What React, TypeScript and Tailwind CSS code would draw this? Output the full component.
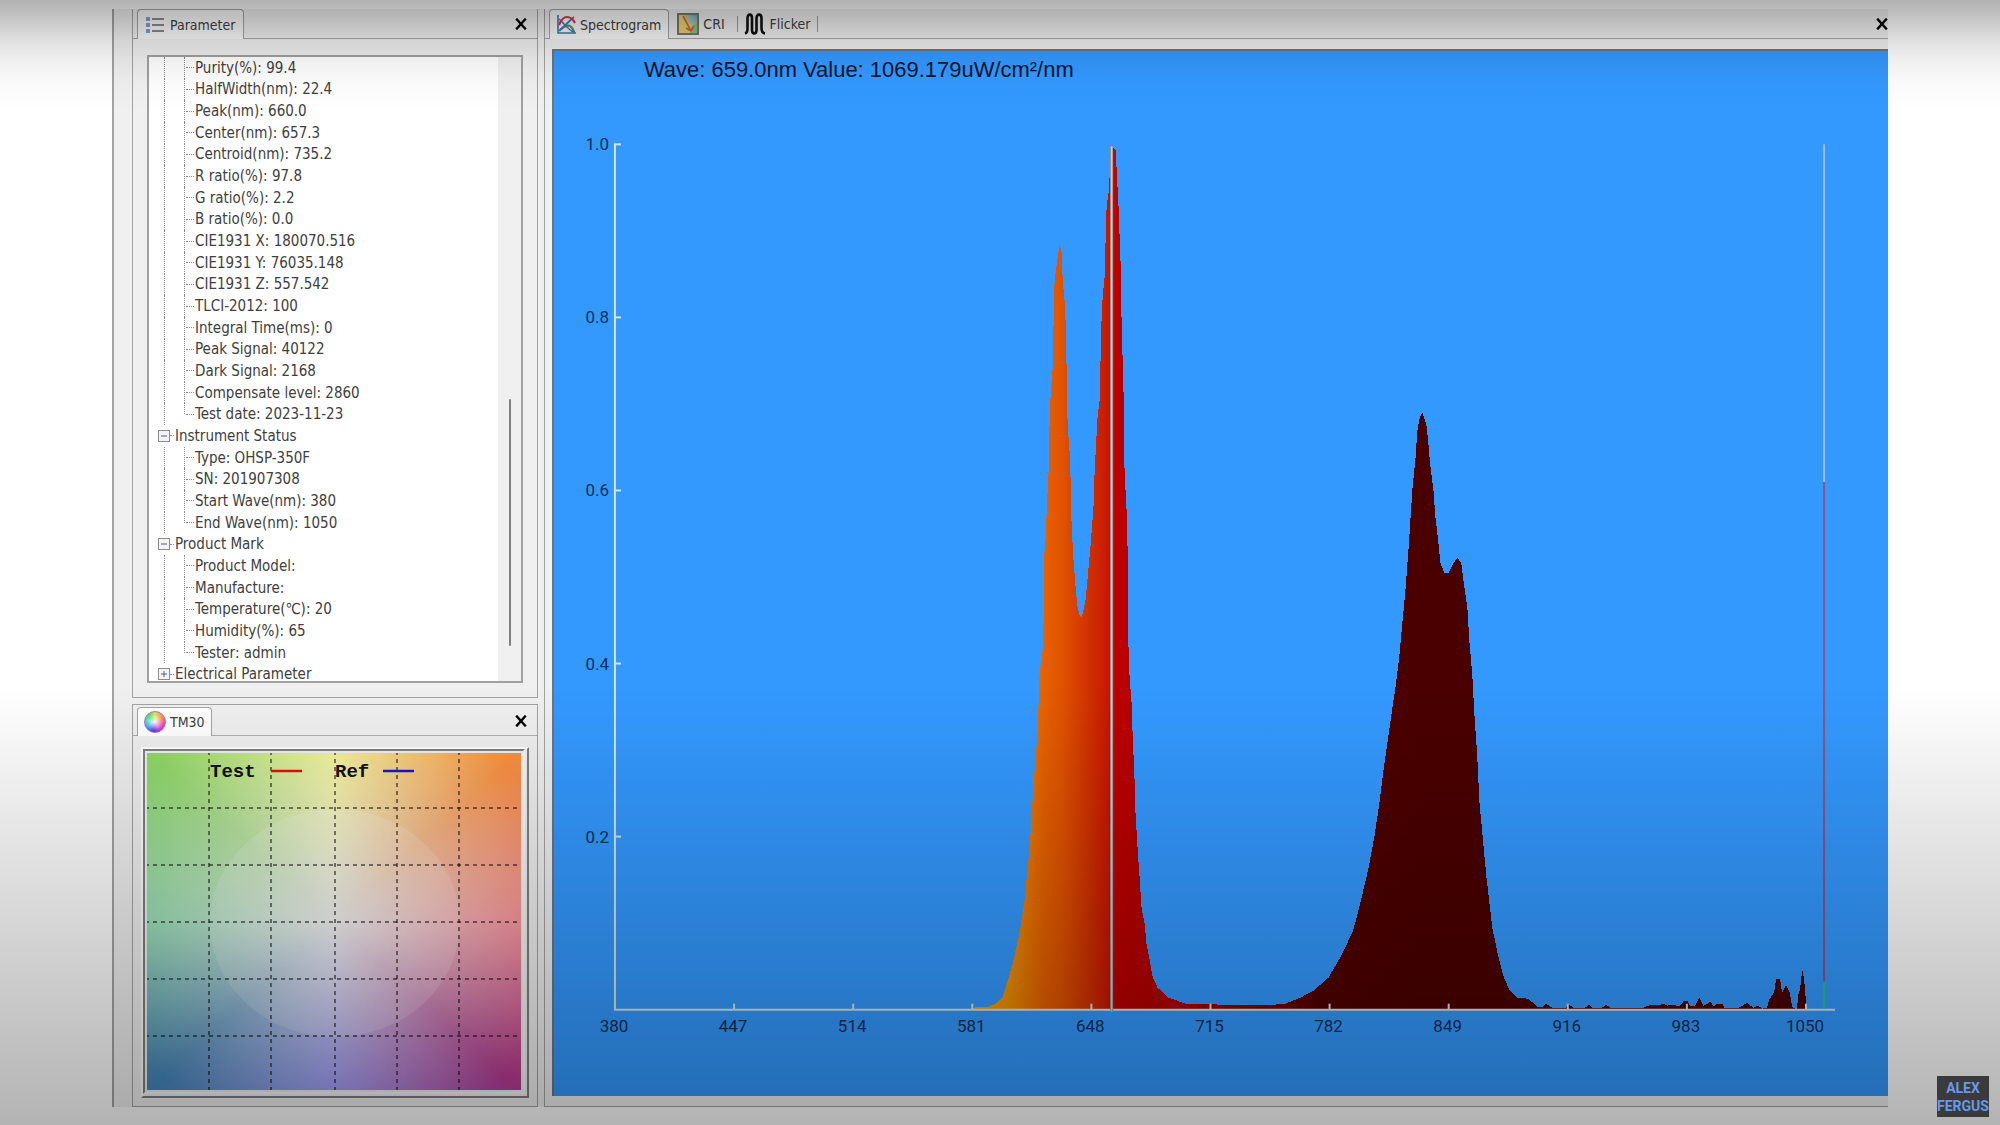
import React from 'react';

type TreeRow = {
  label: string;
  kind: 'leaf' | 'last' | 'open' | 'closed';
};

const treeRows: TreeRow[] = [
  { label: 'Purity(%): 99.4', kind: 'leaf' },
  { label: 'HalfWidth(nm): 22.4', kind: 'leaf' },
  { label: 'Peak(nm): 660.0', kind: 'leaf' },
  { label: 'Center(nm): 657.3', kind: 'leaf' },
  { label: 'Centroid(nm): 735.2', kind: 'leaf' },
  { label: 'R ratio(%): 97.8', kind: 'leaf' },
  { label: 'G ratio(%): 2.2', kind: 'leaf' },
  { label: 'B ratio(%): 0.0', kind: 'leaf' },
  { label: 'CIE1931 X: 180070.516', kind: 'leaf' },
  { label: 'CIE1931 Y: 76035.148', kind: 'leaf' },
  { label: 'CIE1931 Z: 557.542', kind: 'leaf' },
  { label: 'TLCI-2012: 100', kind: 'leaf' },
  { label: 'Integral Time(ms): 0', kind: 'leaf' },
  { label: 'Peak Signal: 40122', kind: 'leaf' },
  { label: 'Dark Signal: 2168', kind: 'leaf' },
  { label: 'Compensate level: 2860', kind: 'leaf' },
  { label: 'Test date: 2023-11-23', kind: 'last' },
  { label: 'Instrument Status', kind: 'open' },
  { label: 'Type: OHSP-350F', kind: 'leaf' },
  { label: 'SN: 201907308', kind: 'leaf' },
  { label: 'Start Wave(nm): 380', kind: 'leaf' },
  { label: 'End Wave(nm): 1050', kind: 'last' },
  { label: 'Product Mark', kind: 'open' },
  { label: 'Product Model:', kind: 'leaf' },
  { label: 'Manufacture:', kind: 'leaf' },
  { label: 'Temperature(℃): 20', kind: 'leaf' },
  { label: 'Humidity(%): 65', kind: 'leaf' },
  { label: 'Tester: admin', kind: 'last' },
  { label: 'Electrical Parameter', kind: 'closed' },
];

const waveTicks = [380, 447, 514, 581, 648, 715, 782, 849, 916, 983, 1050];
const valueTicks = ['1.0', '0.8', '0.6', '0.4', '0.2'];

// Plot geometry
const baseY = 959;
const topY = 93;
const waveX = (nm: number) => 60 + (nm - 380) * 1.779;
const valueY = (v: number) => baseY - v * (baseY - topY);

// Spectrum outlines, x,y in plot units
const orangeBand =
  '418,957 434,956 441,953 448,946 454,927 459,909 465,882 470,849 475,797 479,732 483,682 485,622 488,599 489,569 489,512 491,487 492,462 494,419 495,369 496,344 498,317 499,269 500,229 503,206 505,194 507,201 508,227 510,250 511,271 512,318 513,374 515,401 516,429 517,474 519,511 521,536 523,557 525,564 527,566';

const redBand =
  '529,559 531,549 533,527 536,494 537,481 539,454 540,421 542,384 543,366 545,349 546,307 547,267 548,247 550,226 551,189 552,156 554,141 555,126 556,102 558,95 561,99 562,117 564,156 565,184 566,211 567,269 569,343 570,421 572,459 573,497 573,569 575,626 577,652 578,682 580,729 581,764 583,797 585,826 587,857 590,872 592,894 595,909 598,926 603,937 614,947 631,953 669,954 719,954 731,953 746,947';

const infraRedBand =
  '759,940 774,927 788,903 799,879 806,852 814,818 820,786 825,752 829,720 833,692 837,664 841,637 845,605 848,572 851,540 854,500 856,470 858,438 861,409 863,380 865,368 868,361 872,373 874,392 876,415 879,438 881,465 884,491 886,512 890,522 894,522 899,512 903,507 907,512 909,529 913,556 915,590 918,624 920,662 923,706 925,750 929,793 932,825 935,851 938,877 943,901 949,925 955,939 963,947 974,948 983,956 989,956 992,953 998,957 1004,957';

const noiseFloor =
  '1006,957 1012,957 1015,954 1019,957 1031,957 1035,954 1038,957 1048,957 1052,954 1056,957 1066,957 1089,957 1094,955 1099,954 1106,954 1110,953 1113,955 1119,954 1125,956 1130,950 1133,950 1136,955 1141,955 1145,947 1149,955 1152,954 1156,951 1160,956 1163,953 1168,953 1170,957 1185,957 1193,952 1199,957 1204,955 1208,958 1213,957 1215,949 1220,942 1222,928 1226,928 1228,942 1232,934 1236,943 1238,956 1241,958 1243,958 1244,945 1246,939 1248,920 1249,920 1250,931 1251,935 1252,958';

function CloseButton() {
  return (
    <button type="button" aria-label="Close" className="flex h-5 w-5 items-center justify-center text-black">
      <svg viewBox="0 0 12 12" className="h-3 w-3">
        <path d="M2 1.5 L10 10.5 M10 1.5 L2 10.5" stroke="currentColor" strokeWidth="2.4" strokeLinecap="square" />
      </svg>
    </button>
  );
}

function ListIcon() {
  return (
    <svg viewBox="0 0 18 18" className="h-[18px] w-[18px]">
      {[1, 7, 13].map((y) => (
        <g key={y}>
          <rect x="0" y={y} width="4" height="4" fill="#7f9fcf" />
          <rect x="6" y={y + 1} width="12" height="2" fill="#8a8a8a" />
        </g>
      ))}
    </svg>
  );
}

function SpectrumIcon() {
  return (
    <svg viewBox="0 0 19 19" className="h-[19px] w-[19px]" fill="none">
      <path d="M1 0 V18 H19" stroke="#3f78b8" strokeWidth="1.6" />
      <path d="M2 16 C6 12 10 10 13 11 C15 12 16 14 17 17" stroke="#55a055" strokeWidth="2.2" />
      <path d="M2 4 C6 7 8 11 11 13 C13 15 16 17 18 17" stroke="#3f78b8" strokeWidth="1.4" />
      <path d="M3 15 C8 11 12 6 17 2" stroke="#4a78c8" strokeWidth="1.8" />
      <path d="M2 10 C4 5 6 2 10 2 C13 2 16 4 18 8" stroke="#d23a4a" strokeWidth="2.2" />
    </svg>
  );
}

function CriIcon() {
  return (
    <svg viewBox="0 0 22 22" className="h-[22px] w-[22px]">
      <defs>
        <linearGradient id="criFill" x1="0" y1="1" x2="1" y2="0">
          <stop offset="0" stopColor="#e8c860" />
          <stop offset="0.45" stopColor="#d8d890" />
          <stop offset="1" stopColor="#5f9fe0" />
        </linearGradient>
      </defs>
      <rect x="1" y="1" width="20" height="20" fill="url(#criFill)" />
      <path d="M2 2 H7 L10 12 L14 20 H2 Z" fill="#ecd070" />
      <path d="M14 14 L20 9 V20 H13 Z" fill="#8fc088" />
      <path d="M6 3 L14 18 M14 18 L9 15 M14 18 L17 13" stroke="#d8662a" strokeWidth="1.6" fill="none" />
      <rect x="1" y="1" width="20" height="20" fill="none" stroke="#77786a" strokeWidth="2" />
    </svg>
  );
}

function FlickerIcon() {
  return (
    <svg viewBox="0 0 22 22" className="h-[22px] w-[22px]">
      <path
        d="M1 20.5 C3 20 3.500 18 3.500 15 V5 C3.500 0.500 8 0.500 8 5 V17 C8 21.500 12.500 21.500 12.500 17 V5 C12.500 0.500 17.500 0.500 17.500 5 V15 C17.500 18 18 20 21 20.500"
        fill="none"
        stroke="#111"
        strokeWidth="2.6"
      />
    </svg>
  );
}

function ColorWheelIcon() {
  return (
    <span className="h-[22px] w-[22px] rounded-full border border-[#b070d8] bg-[radial-gradient(circle,#ffffff_0%,#ffffff00_65%),conic-gradient(#d8e840,#ff9040_50deg,#ff4090_100deg,#d030e0_145deg,#5030e0_190deg,#40a8f0_240deg,#40e8c0_280deg,#50e050_320deg,#d8e840)]" />
  );
}

function TreeItem({ label, kind }: TreeRow) {
  if (kind === 'open' || kind === 'closed') {
    return (
      <li className="flex items-center pl-[9px] whitespace-nowrap">
        <button
          type="button"
          aria-label={`Toggle ${label}`}
          className="flex h-3 w-3 items-center justify-center border border-[#8c8c8c] bg-[#f4f4f4]"
        >
          <svg viewBox="0 0 8 8" className="h-2 w-2" stroke="#4a5fa8">
            <path d={kind === 'open' ? 'M1 4 H7' : 'M1 4 H7 M4 1 V7'} />
          </svg>
        </button>
        <span className="w-1 border-t border-dotted border-[#999]" />
        <span className="ml-px">{label}</span>
      </li>
    );
  }
  return (
    <li className="flex items-center pl-[15px] whitespace-nowrap">
      <span className="w-5 self-stretch border-l border-dotted border-[#888]" />
      <span
        className={
          kind === 'last'
            ? 'h-1/2 w-0.5 self-start border-l border-dotted border-[#888]'
            : 'w-0.5 self-stretch border-l border-dotted border-[#888]'
        }
      />
      <span className="w-2 border-t border-dotted border-[#888]" />
      <span className="ml-px">{label}</span>
    </li>
  );
}

function ParameterPanel() {
  return (
    <section className="flex min-h-0 flex-1 flex-col border border-t-0 border-[#a3a3a3] bg-[#f0f0f0]">
      <header className="flex h-[30px] items-stretch border-b border-[#a3a3a3] pl-1">
        <button
          type="button"
          className="-mb-px flex items-center gap-1.5 rounded-t border border-b-0 border-[#a3a3a3] bg-[#fafafa] pr-2 pl-2"
        >
          <ListIcon />
          Parameter
        </button>
        <div className="ml-auto flex items-center pr-1.5">
          <CloseButton />
        </div>
      </header>
      <div className="flex min-h-0 flex-1 px-3.5 pt-4 pb-3.5">
        <div className="flex min-w-0 flex-1 overflow-hidden border-2 border-[#a0a0a0] bg-white">
          <ul className="-mb-1 grid flex-1 auto-rows-fr text-[15px] leading-4">
            {treeRows.map((row) => (
              <TreeItem key={row.label} {...row} />
            ))}
          </ul>
          <div className="flex w-[23px] flex-col items-center bg-[#f0f0f0]">
            <div className="flex-[343]" />
            <div className="w-0.5 flex-[248] rounded-full bg-[#808080]" />
            <div className="flex-[35]" />
          </div>
        </div>
      </div>
    </section>
  );
}

function ColorVectorPanel() {
  return (
    <section className="flex flex-col border border-[#a3a3a3] bg-[#f0f0f0]">
      <header className="flex h-[31px] items-stretch border-b border-[#b0b0b0] pt-0.5 pl-1">
        <button
          type="button"
          className="-mb-px flex items-center gap-1 rounded-t border border-b-0 border-[#a3a3a3] bg-white pr-1.5 pl-1.5"
        >
          <ColorWheelIcon />
          TM30
        </button>
        <div className="ml-auto flex items-center pr-1.5">
          <CloseButton />
        </div>
      </header>
      <div className="px-2 pt-[11px] pb-2">
        <div className="border-t-2 border-r-2 border-b-2 border-l-2 border-t-[#ffffff] border-r-[#808080] border-b-[#808080] border-l-[#ffffff] pr-0.5 pb-0.5">
          <div className="border-2 border-t-[#808080] border-r-[#f8f8f8] border-b-[#f8f8f8] border-l-[#808080] p-0.5">
            <svg
              viewBox="0 0 374 337"
              className="block w-full bg-[radial-gradient(ellipse_farthest-side,#f4f4f4_0%,#f4f4f4cc_25%,#f4f4f46b_70%,#f4f4f400_130%),conic-gradient(#f4f488,#fa9040_48deg,#ff8088_90deg,#b83c94_132deg,#8c88fa_180deg,#4688bc_228deg,#84dca8_270deg,#90d868_312deg,#f4f488)]"
            >
              <ellipse cx="188" cy="170" rx="125" ry="114" fill="#ffffff" fillOpacity="0.16" />
              <g stroke="#000000" strokeOpacity="0.65" strokeDasharray="4 4">
                {[62, 124, 188, 250, 312].map((x) => (
                  <line key={x} x1={x} y1="-2" x2={x} y2="337" strokeWidth="1.5" />
                ))}
                {[55, 112, 169, 226, 283].map((y) => (
                  <line key={y} x1="-2" y1={y} x2="374" y2={y} strokeWidth="1.5" />
                ))}
              </g>
              <g fontFamily="'Liberation Mono', monospace" fontSize="19" fontWeight="bold" fill="#111">
                <text x="63" y="24">Test</text>
                <text x="188" y="24">Ref</text>
              </g>
              <line x1="124" y1="18" x2="155" y2="18" stroke="#e01010" strokeWidth="2.5" />
              <line x1="236" y1="18" x2="267" y2="18" stroke="#1818c8" strokeWidth="2.5" />
            </svg>
          </div>
        </div>
      </div>
    </section>
  );
}

function SpectrumChart() {
  return (
    <svg viewBox="-1 0 1335 1045" className="block h-full w-full">
      <defs>
        <linearGradient id="spectrum" gradientUnits="userSpaceOnUse" x1="418" y1="0" x2="868" y2="0">
          <stop offset="0" stopColor="#f0a400" />
          <stop offset="0.08" stopColor="#f09000" />
          <stop offset="0.16" stopColor="#e66000" />
          <stop offset="0.2" stopColor="#e05200" />
          <stop offset="0.26" stopColor="#d03000" />
          <stop offset="0.3" stopColor="#c81800" />
          <stop offset="0.32" stopColor="#bc0000" />
          <stop offset="0.45" stopColor="#b00000" />
          <stop offset="0.6" stopColor="#800000" />
          <stop offset="0.78" stopColor="#500000" />
          <stop offset="1" stopColor="#4a0000" />
        </linearGradient>
      </defs>

      <text x="89" y="26" fontFamily="'Liberation Sans', sans-serif" fontSize="22" fill="#0a1430">
        Wave: 659.0nm Value: 1069.179uW/cm²/nm
      </text>

      <polygon
        points={`418,959 ${orangeBand} ${redBand} ${infraRedBand} ${noiseFloor} 1252,959`}
        fill="url(#spectrum)"
        shapeRendering="crispEdges"
      />

      {/* Axes */}
      <g stroke="#d4e4e0" strokeWidth="2" fill="none">
        <path d={`M60 ${topY} V${baseY} H1281`} />
        {waveTicks.map((nm) => (
          <line key={nm} x1={waveX(nm)} y1={baseY - 6} x2={waveX(nm)} y2={baseY} />
        ))}
        {valueTicks.map((v) => (
          <line key={v} x1="59" y1={valueY(Number(v))} x2="66" y2={valueY(Number(v))} />
        ))}
      </g>
      <g fontFamily="Roboto, sans-serif" fontSize="17" fill="#0f3058">
        {waveTicks.map((nm) => (
          <text key={nm} x={waveX(nm) - 1} y={baseY + 22} textAnchor="middle">
            {nm}
          </text>
        ))}
        {valueTicks.map((v) => (
          <text key={v} x="54" y={valueY(Number(v)) + 6} textAnchor="end">
            {v}
          </text>
        ))}
      </g>

      {/* Cursor */}
      <line x1="557" y1={topY + 2} x2="557" y2={baseY + 2} stroke="#7f6a70" strokeWidth="3" />
      <line x1="557" y1={topY + 2} x2="557" y2={baseY + 2} stroke="#d0c8c8" strokeWidth="2" />

      {/* Level bar */}
      <g strokeWidth="2">
        <line x1="1270" y1={topY} x2="1270" y2="431" stroke="#a0bce8" />
        <line x1="1270" y1="431" x2="1270" y2="931" stroke="#945080" />
        <line x1="1270" y1="931" x2="1270" y2="958" stroke="#2cc080" />
      </g>
    </svg>
  );
}

function SpectrogramPanel() {
  return (
    <section className="flex min-w-0 flex-1 flex-col border-b border-l border-[#a3a3a3] bg-[#f0f0f0]">
      <header className="flex h-[30px] items-stretch border-b border-[#a3a3a3] pl-1">
        <button
          type="button"
          className="-mb-px flex items-center gap-1 rounded-t border border-b-0 border-[#a3a3a3] bg-[#fafafa] px-[7px]"
        >
          <SpectrumIcon />
          Spectrogram
        </button>
        <button type="button" className="flex items-center gap-1 px-2">
          <CriIcon />
          CRI
        </button>
        <span className="ml-1 h-4 w-px self-center bg-[#999]" />
        <button type="button" className="flex items-center gap-1 px-1.5">
          <FlickerIcon />
          Flicker
        </button>
        <span className="h-4 w-px self-center bg-[#999]" />
        <div className="-mr-1 ml-auto flex items-center">
          <CloseButton />
        </div>
      </header>
      <div className="min-h-0 flex-1 pt-2.5 pb-2.5 pl-[7px]">
        <div className="h-full border-t-2 border-l-2 border-[#6c7680] bg-[#3399ff]">
          <SpectrumChart />
        </div>
      </div>
    </section>
  );
}

export default function App() {
  return (
    <div className="relative flex h-screen overflow-hidden bg-white px-28 pt-[9px] pb-[18px] font-['DejaVu_Sans_Condensed','DejaVu_Sans','Noto_Sans_CJK_SC',sans-serif] text-sm text-[#404040]">
      <main className="flex min-w-0 flex-1 gap-1.5 overflow-hidden border-l-2 border-[#a3a3a3] bg-[#f0f0f0] pl-[18px]">
        <div className="flex w-[406px] shrink-0 flex-col gap-1.5">
          <ParameterPanel />
          <ColorVectorPanel />
        </div>
        <SpectrogramPanel />
      </main>

      {/* Shade along the top and bottom edges */}
      <div className="pointer-events-none absolute inset-x-0 top-0 h-[110px] bg-[linear-gradient(#0000004d,#00000038_18%,#00000020_36%,#00000010_54%,#00000005_76%,#00000000)]" />
      <div className="pointer-events-none absolute inset-x-0 bottom-0 h-[440px] bg-linear-to-b from-[#00000000] to-[#0000004c]" />

      <div className="absolute right-[11px] bottom-2 flex h-[41px] w-[52px] flex-col items-center justify-center bg-[#3a3a3a] font-[Roboto,sans-serif] text-sm leading-[18px] font-bold text-[#6699ea]">
        <span>ALEX</span>
        <span>FERGUS</span>
      </div>
    </div>
  );
}
